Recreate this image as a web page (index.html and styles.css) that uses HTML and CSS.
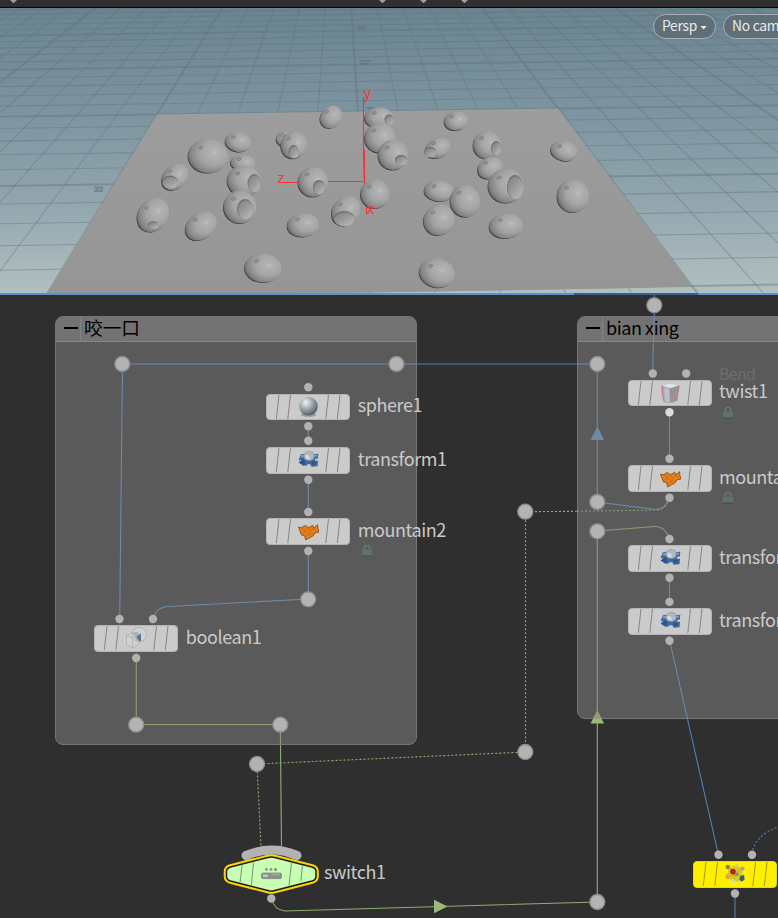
FILE: index.html
```html
<!DOCTYPE html>
<html lang="zh">
<head>
<meta charset="utf-8">
<title>Scene and network</title>
<link rel="stylesheet" href="styles.css">
</head>
<body>
<main class="app">
  <header class="topbar">
    <svg class="topbar-marks" viewBox="0 0 778 8"><path d="M10 0h7l-3.500 3.200zM379 0h7l-3.500 3.200zM420 0h7l-3.500 3.200zM461 0h7l-3.500 3.200z"/></svg>
  </header>

  <section class="viewport">
    <svg class="scene" viewBox="0 8 778 287">
      <defs>
        <linearGradient id="sky" x1="0" y1="0" x2="0" y2="1">
          <stop offset="0" stop-color="#6a8490"/><stop offset=".35" stop-color="#7c949f"/>
          <stop offset=".65" stop-color="#90a4ad"/><stop offset="1" stop-color="#b2c0c1"/>
        </linearGradient>
        <linearGradient id="ground" x1="0" y1="0" x2="0" y2="1">
          <stop offset="0" stop-color="#9d9d9d"/><stop offset="1" stop-color="#959595"/>
        </linearGradient>
        <radialGradient id="body" cx=".66" cy=".4" r=".82">
          <stop offset="0" stop-color="#c4c4c4"/><stop offset=".08" stop-color="#b3b3b3"/><stop offset=".45" stop-color="#a4a4a4"/>
          <stop offset=".72" stop-color="#868686"/><stop offset="1" stop-color="#3e3e3e"/>
        </radialGradient>
        <linearGradient id="cut" x1="0" y1="0" x2=".8" y2="1">
          <stop offset="0" stop-color="#7f7f7f"/><stop offset=".55" stop-color="#9c9c9c"/><stop offset="1" stop-color="#b8b8b8"/>
        </linearGradient>
      </defs>
      <rect x="0" y="8" width="778" height="287" fill="url(#sky)"/>
      <g id="grid" class="grid"></g>
      <g class="ticks">
        <path d="M94 187.500h8M94 191h9M97 187v5M103 187l-3 5"/><path d="M356 27h10M358 29h6M359 61h12M360 64h9M366 108h9"/>
      </g>
      <path d="M157 114.500 558 108.500 692 286 640 288 400 292 46 295z" fill="url(#ground)"/>
      <g class="axis"><path d="M364.500 150V189M279 182.500h20M328 181.500h35M366.500 207v7"/></g>
      <g id="apples"></g>
      <g class="axis"><path d="M363.500 97V150L364.300 182"/></g>
      <g class="axis-text"><text x="363.500" y="98">y</text><text x="277.500" y="183">z</text><text x="366.500" y="214">x</text></g>
      <path class="edge" d="M0 294h778"/><path class="edge edge-dark" d="M574 294h124"/>
    </svg>
    <div class="camera-menu">
      <button class="pill">Persp<span class="caret"></span></button>
      <button class="pill">No cam<span class="caret"></span></button>
    </div>
  </section>

  <section class="network">
    <div class="netbox box-bite">
      <div class="netbox-head"><span class="fold"><i></i></span><span>咬一口</span></div>
    </div>
    <div class="netbox box-deform">
      <div class="netbox-head latin"><span class="fold"><i></i></span><span>bian xing</span></div>
    </div>

    <svg class="wires" viewBox="0 295 778 623">
      <g class="blue-in">
        <path d="M416 364H122.500L119.700 619"/><path d="M308.300 426V441M308.300 480V512M308.300 551V599L169 606.500Q156 607 153 619"/>
        <path d="M577 364H597.300V502L656 509.500Q665 510 669.500 498"/>
        <path d="M653.900 317 652.700 373M669.500 412V459M669.500 578V602M669.500 640 687.500 719"/>
      </g>
      <g class="blue-out">
        <path d="M417 364H577M654.300 295V317M687.500 719 718.500 855M735 893V918"/>
        <path class="dash" d="M752 854Q754 836 778 827"/>
      </g>
      <g class="green-in">
        <path d="M136.300 658V724.500H280.300L280.500 744M597.300 719V531L655 526.500Q665 526 669.500 539"/>
        <path class="dash" d="M577 511.300 656 510Q665 510 669.500 498"/>
      </g>
      <g class="green-out">
        <path d="M280.500 745 281.500 848M271.300 898Q274 910 285 911L597.300 902V719"/>
        <path class="dash" d="M577 511.300 525.500 511.700V752L257 764 261 847"/>
      </g>
      <path fill="#7089a9" d="M597.300 426.500l6.800 13.500h-13.600z"/>
      <path fill="#9bb97a" d="M597.300 710.500l6.800 13h-13.600zM447.500 906.500l-13.500-6.800v13.600z"/>
      <path fill="#8d9e78" d="M597.300 710.500l4.400 8.500h-8.800z"/>
      <g class="dots">
        <circle cx="122.300" cy="364" r="7.500"/><circle cx="396.500" cy="364" r="7.500"/><circle cx="597.300" cy="364" r="7.500"/>
        <circle cx="308.200" cy="599.300" r="7.500"/><circle cx="136.200" cy="724.700" r="7.500"/><circle cx="280.300" cy="724.700" r="7.500"/>
        <circle cx="257" cy="764" r="7.500"/><circle cx="525.300" cy="752" r="7.500"/><circle cx="525.300" cy="511.700" r="7.500"/>
        <circle cx="597.300" cy="502" r="7.500"/><circle cx="597.300" cy="531.300" r="7.500"/><circle cx="654.300" cy="305.300" r="7.500"/>
        <circle cx="597.300" cy="902" r="7.500"/>
      </g>
      <g class="ports">
        <circle cx="308.300" cy="387.200" r="4.200"/><circle cx="308.300" cy="426.300" r="4.200"/><circle cx="308.300" cy="440.800" r="4.200"/>
        <circle cx="308.300" cy="479.800" r="4.200"/><circle cx="308.300" cy="512" r="4.200"/><circle cx="308.300" cy="551" r="4.200"/>
        <circle cx="119.500" cy="619" r="4.200"/><circle cx="153" cy="619" r="4.200"/><circle cx="136.200" cy="658" r="4.200"/>
        <circle cx="652.800" cy="373.500" r="4.200"/><circle cx="686.200" cy="373.500" r="4.200"/><circle cx="669.500" cy="412.300" r="4.200" class="lit"/>
        <circle cx="669.500" cy="458.800" r="4.200"/><circle cx="669.500" cy="497.700" r="4.200"/><circle cx="669.500" cy="539" r="4.200"/>
        <circle cx="669.500" cy="577.800" r="4.200"/><circle cx="669.500" cy="601.900" r="4.200"/><circle cx="669.500" cy="640.700" r="4.200"/>
        <circle cx="718.500" cy="854.700" r="4.200"/><circle cx="752" cy="854.700" r="4.200"/><circle cx="735" cy="893.500" r="4.200"/>
        <circle cx="271.300" cy="898.500" r="4.200"/>
      </g>
      <path class="collar" d="M246 855.500Q271.500 844.500 297 855.500"/>
      <g>
        <path class="switch-line" d="M267.800 857.500Q271.300 856.400 274.800 857.500L312 867Q316 868.200 316 871.500V876.500Q316 879.800 312 881L274.800 890.500Q271.300 891.600 267.800 890.500L230.500 881Q226.500 879.800 226.500 876.500V871.500Q226.500 868.200 230.500 867z"/>
        <path class="switch-fill" d="M267.800 857.500Q271.300 856.400 274.800 857.500L312 867Q316 868.200 316 871.500V876.500Q316 879.800 312 881L274.800 890.500Q271.300 891.600 267.800 890.500L230.500 881Q226.500 879.800 226.500 876.500V871.500Q226.500 868.200 230.500 867z"/>
        <path class="switch-bars" d="M242 865l-1.800 17M253.500 862.500l-2.200 23M291.500 862.500l-2.500 23M302.500 865.500l-1.700 16"/>
        <circle cx="266.500" cy="869.500" r="1.400" fill="#8b9a86"/><circle cx="271" cy="869.500" r="1.400" fill="#8b9a86"/><circle cx="275.500" cy="869.500" r="1.500" fill="#b27a52"/>
        <rect x="261.500" y="873" width="20" height="5.600" rx="1.500" fill="#87918d" stroke="#727b79" stroke-width=".7"/>
        <path d="M263 874.500h5v2.500h-5z" fill="#b8cdb8"/><path d="M271 874.300h9" stroke="#adb5b5"/>
      </g>
    </svg>

    <svg class="defs" aria-hidden="true">
      <defs>
        <radialGradient id="ball" cx=".36" cy=".3" r=".7"><stop offset="0" stop-color="#f1f4f5"/><stop offset=".45" stop-color="#a6afb5"/><stop offset="1" stop-color="#59636c"/></radialGradient>
      </defs>
      <symbol id="i-sphere" viewBox="0 0 22 22"><ellipse cx="11" cy="19" rx="8" ry="2.300" fill="#999"/><circle cx="11" cy="10.300" r="9.700" fill="url(#ball)"/></symbol>
      <symbol id="i-transform" viewBox="0 0 22 22">
        <path d="M3 5l4-.5 1.500 2h4.500l2-1.500 6.300-.5-.5 5-3.300.5.500 1.500 3 .5-.5 5.500-6.500.5-.8-2.200-3-.5-1 1.500-3.700.2-5-3.500 3.500-1-.5-1.500-3 .2z" fill="#41699c"/>
        <path d="M.8 13.500l4-3.500 3 3-1.500 3.500zM14 12.500l5 .5-1.500 3.500-3-.5z" fill="#2b5590"/><path d="M3 6l4-.5 1 2.500-4.500.5zM16 6l4-.8-.5 3z" fill="#7ea2cb"/>
        <path d="M6.500 5Q8 1.800 12 2q5 .3 5 4.500.3 4-4 5-5.500.3-6.500-3z" fill="#b0b7be" stroke="#858d96" stroke-width=".6"/><path d="M7.500 5.500l4.500 1v4.300l-4-1.500z" fill="#d5dade"/>
      </symbol>
      <symbol id="i-mountain" viewBox="0 0 22 22">
        <path d="M.6 7l3.200.5 3.700-2.300 3.500 2.300 4.500-2.500 1 3 4-3.700.3 4L22 12l-4.500 1-1.500 3-8 4.300-1-4.300-3.500-1z" fill="#e68019" stroke="#884813" stroke-width=".9"/>
        <path d="M3.800 7.500l3.700 2.800 3.500-2.800 2 3.500 3.500-3 2 2.500M5 14l2.500-3.700 4 4.700 1.500-4M7.500 17l4-2 5-1.500" fill="none" stroke="#b8641a" stroke-width=".7"/>
      </symbol>
      <symbol id="i-twist" viewBox="0 0 22 22">
        <path d="M1.700 3.500Q10 -.5 20.300 3L17.500 19.500Q11 23.500 4.500 20.500z" fill="#a3a9b0"/><path d="M9 6 19.500 3.500 17 19 10 21z" fill="#8f979f"/><path d="M4.500 6 10 6.500V21l-5-1z" fill="#bbc1c7"/>
        <path d="M2 3.500Q10 -.5 20 3L11 6z" fill="#dce2e6"/>
        <path d="M2 3.500Q1.500 12 4.500 20.500M20 3.200 17.500 19M10.500 6.500 16.800 18.500" fill="none" stroke="#c97378" stroke-width="1.100"/>
      </symbol>
      <symbol id="i-boolean" viewBox="0 0 22 22">
        <path d="M.5 8.500 7 5l7 3v9l-7 4.500-6.500-4zM.5 8.500l6.500 3 7-3.500M7 11.500v10" fill="#dbdbdb" fill-opacity=".5" stroke="#aaa" stroke-width=".8"/>
        <circle cx="14" cy="7.500" r="7.500" fill="#d8dadb" fill-opacity=".5" stroke="#aaa" stroke-width=".8"/>
        <path d="M7 6l3.500-1.500 5 2V14l-4.500-.5z" fill="#a6b1c1"/><path d="M11 9.500l4.700-3V14l-2 .7z" fill="#64718a"/>
      </symbol>
      <symbol id="i-scatter" viewBox="0 0 22 22">
        <path d="M3 5l6-3 8 2 2 9-5 6-7-1-4-5z" fill="#d8cb25"/><path d="M3 4 12 9 18 5M8 8l4 3 6 5M4 14l8-3-4 7" stroke="#bbae22" fill="none"/>
        <circle cx="3" cy="3.600" r="2.400" fill="#858b55"/><circle cx="12.500" cy="2.500" r="1.600" fill="#d5c995"/><circle cx="18.500" cy="5.500" r="2.200" fill="#b795a3"/>
        <circle cx="8.300" cy="8.500" r="3" fill="#b42419"/><circle cx="12.600" cy="11.200" r="2" fill="#88946a"/><circle cx="3" cy="13.500" r="2.700" fill="#eda728"/>
        <path d="M16 13l4-1 .5 5-3 2-2.500-2z" fill="#345e80"/><path d="M7 16l3 1 1 4-4 .5z" fill="#dddfa0"/>
      </symbol>
      <symbol id="i-lock" viewBox="0 0 12 13"><path d="M3.300 6V4a2.700 2.700 0 0 1 5.400 0v2" fill="none" stroke="#707a76" stroke-width="1.300"/><path d="M1.200 5.600h9.600l.6 6.600H.6z" fill="#5f716d"/><path d="M.8 12.100h10.400" stroke="#3e4a48" stroke-width=".9"/></symbol>
      <symbol id="node-bars" viewBox="0 0 84 26"><path d="M13 1 10.300 25M24.500 1 21.800 25M62.500 1 59.800 25M74 1 71.300 25"/></symbol>
    </svg>

    <div class="node n-sphere"><div class="tile"><svg class="bars"><use href="#node-bars"/></svg><svg class="icon"><use href="#i-sphere"/></svg></div><span class="name">sphere1</span></div>
    <div class="node n-transform"><div class="tile"><svg class="bars"><use href="#node-bars"/></svg><svg class="icon"><use href="#i-transform"/></svg></div><span class="name">transform1</span></div>
    <div class="node n-mountain2"><div class="tile"><svg class="bars"><use href="#node-bars"/></svg><svg class="icon"><use href="#i-mountain"/></svg></div><span class="name">mountain2</span><svg class="lock"><use href="#i-lock"/></svg></div>
    <div class="node n-boolean"><div class="tile"><svg class="bars"><use href="#node-bars"/></svg><svg class="icon"><use href="#i-boolean"/></svg></div><span class="name">boolean1</span></div>
    <div class="node n-twist"><div class="tile"><svg class="bars"><use href="#node-bars"/></svg><svg class="icon"><use href="#i-twist"/></svg></div><span class="kind">Bend</span><span class="name">twist1</span><svg class="lock"><use href="#i-lock"/></svg></div>
    <div class="node n-mountain"><div class="tile"><svg class="bars"><use href="#node-bars"/></svg><svg class="icon"><use href="#i-mountain"/></svg></div><span class="name">mountain1</span><svg class="lock"><use href="#i-lock"/></svg></div>
    <div class="node n-transform-a"><div class="tile"><svg class="bars"><use href="#node-bars"/></svg><svg class="icon"><use href="#i-transform"/></svg></div><span class="name">transform2</span></div>
    <div class="node n-transform-b"><div class="tile"><svg class="bars"><use href="#node-bars"/></svg><svg class="icon"><use href="#i-transform"/></svg></div><span class="name">transform3</span></div>
    <div class="node n-scatter"><div class="tile tile-yellow"><svg class="bars"><use href="#node-bars"/></svg><svg class="icon"><use href="#i-scatter"/></svg></div></div>
    <span class="name n-switch">switch1</span>
  </section>
</main>
<script src="scene.js"></script>
</body>
</html>
```
FILE: styles.css
```css
* { box-sizing: border-box; }
body { margin: 0; background: #2f2f2f; font-family: "Noto Sans CJK SC", "Noto Sans", sans-serif; }
.app { display: flex; flex-direction: column; width: 778px; height: 918px; overflow: hidden; }
.topbar { height: 8px; flex: none; background: #2f2f2f; border-bottom: 1px solid #050505; overflow: hidden; }
.topbar-marks { display: block; width: 778px; height: 8px; fill: #a0a0a0; }

.viewport { position: relative; height: 287px; flex: none; overflow: hidden; }
.scene { display: block; width: 778px; height: 287px; }
.grid { fill: none; stroke: #5f727f; stroke-opacity: .42; stroke-width: 1.1; }
.grid .major { stroke-width: 2; }
.ticks { fill: none; stroke: #61717f; stroke-width: 1.8; stroke-opacity: .6; }
.axis { fill: none; stroke: #f23434; stroke-width: 1.1; }
.axis-text { fill: #fa3333; font: 15px "Noto Sans", sans-serif; }
.edge { stroke: #5e90c8; stroke-width: 2; }
.edge-dark { stroke: #375f8e; }
.dimple { fill: #969696; stroke: #757575; stroke-width: .7; }
.bite-rim { fill: #707070; }
.camera-menu { position: absolute; left: 653px; top: 6px; display: flex; gap: 7px; }
.pill { display: flex; align-items: center; justify-content: center; gap: 3px; flex: none; height: 25px; width: 63px; padding: 0 0 3px; border: 1.5px solid #a9b0b4; border-radius: 13px; background: #5f6f78; color: #e8eaeb; font: 13.800px/20px "Noto Sans CJK SC", sans-serif; letter-spacing: -.25px; white-space: nowrap; }
.pill + .pill { width: 90px; justify-content: flex-start; padding-left: 8px; }
.caret { width: 7px; height: 4px; background: #f0f0f0; clip-path: polygon(0 0, 100% 0, 50% 100%); margin-top: 5px; }

.network { position: relative; flex: 1; background: #2f2f2f; overflow: hidden; }
.netbox { position: absolute; background: #5a5a5a; border: 1px solid #757575; border-radius: 8px; overflow: hidden; }
.box-bite { left: 55px; top: 21px; width: 362px; height: 429px; }
.box-deform { left: 577px; top: 21px; width: 260px; height: 403px; }
.netbox-head { display: flex; align-items: center; height: 25px; background: #737373; border-bottom: 1px solid #858585; color: #000; font-size: 18.700px; line-height: 24px; gap: 3px; }
.netbox-head span:last-child { margin-top: -5px; }
.latin { font-size: 18px; letter-spacing: -.42px; }
.fold { display: flex; flex: none; width: 25px; height: 24px; border-right: 1px solid #838383; align-items: center; padding-left: 8px; }
.fold i { width: 14px; height: 2px; background: #000; margin-top: -2px; }

.wires { position: absolute; inset: 0; width: 778px; height: 623px; fill: none; stroke-width: 1.1; }
.blue-in { stroke: #6e89ae; }
.blue-out { stroke: #527fb9; }
.green-in { stroke: #8d9d74; }
.green-out { stroke: #90ae70; }
.dash { stroke-dasharray: 2 2; }
.dots { fill: #b3b3b3; stroke: #8c8c8c; stroke-width: 1.3; }
.ports { fill: #b2b2b2; }
.lit { fill: #dadada; }
.collar { stroke: #b2b2b2; stroke-width: 9; stroke-linecap: round; }
.switch-line { stroke: #ffd20a; stroke-width: 5.600; }
.switch-fill { fill: #c9ffb5; stroke: #1c1e10; stroke-width: 1.500; }
.switch-bars { stroke: #7f9e75; }
.defs { position: absolute; width: 0; height: 0; }

.node { position: absolute; width: 84px; height: 26px; }
.tile { position: relative; display: flex; align-items: center; justify-content: center; width: 84px; height: 26.500px; background: #cbcbcb; border: 1px solid #b4b4b4; border-radius: 4px; }
.tile-yellow { background: #fff000; border-color: #e2d91a; }
.bars { position: absolute; left: -1px; top: -1px; width: 84px; height: 26px; stroke: #858585; stroke-width: 1; }
.tile-yellow .bars { stroke: #a49b10; }
.icon { width: 21px; height: 22px; margin-left: 1px; overflow: visible; }
.name { position: absolute; left: 91.500px; top: -2.500px; font-size: 18px; letter-spacing: -.42px; line-height: 26px; color: #cacaca; white-space: nowrap; }
.kind { position: absolute; left: 91.500px; top: -19px; font-size: 16px; letter-spacing: -.7px; line-height: 24px; color: #6d6d6d; }
.lock { position: absolute; left: 94.500px; top: 26px; width: 12px; height: 13px; }
.n-sphere { left: 266.300px; top: 98.600px; }
.n-transform { left: 266.300px; top: 152.200px; }
.n-mountain2 { left: 266.300px; top: 223.200px; }
.n-boolean { left: 94.300px; top: 330.200px; }
.n-twist { left: 627.500px; top: 84.600px; }
.n-mountain { left: 627.500px; top: 170.100px; }
.n-transform-a { left: 627.500px; top: 250.100px; }
.n-transform-b { left: 627.500px; top: 313.200px; }
.n-scatter { left: 693.200px; top: 566px; }
.n-switch { left: 324px; top: 563px; }
```
FILE: scene.js
```js
const NS = "http://www.w3.org/2000/svg";
function add(parent, tag, attrs) {
  const el = document.createElementNS(NS, tag);
  for (const k in attrs) el.setAttribute(k, attrs[k]);
  parent.appendChild(el);
  return el;
}

// Perspective map of the ground plane: unit square to its four screen corners.
const [x0, y0, x1, y1, x2, y2, x3, y3] = [157, 114.5, 558, 108.5, 692, 286, 45, 297];
const dx1 = x1 - x2, dx2 = x3 - x2, dx3 = x0 - x1 + x2 - x3;
const dy1 = y1 - y2, dy2 = y3 - y2, dy3 = y0 - y1 + y2 - y3;
const det = dx1 * dy2 - dx2 * dy1;
const g = (dx3 * dy2 - dx2 * dy3) / det, h = (dx1 * dy3 - dx3 * dy1) / det;
const a = x1 - x0 + g * x1, b = x3 - x0 + h * x3;
const d = y1 - y0 + g * y1, e = y3 - y0 + h * y3;
function project(u, v) {
  const s = (u + 5) / 10, t = (v + 5) / 10, w = g * s + h * t + 1;
  return w > 0.05 ? [(a * s + b * t + x0) / w, (d * s + e * t + y0) / w] : null;
}
function line(p, q, major) {
  if (!p || !q) return;
  add(grid, "path", { d: `M${p[0].toFixed(1)} ${p[1].toFixed(1)}L${q[0].toFixed(1)} ${q[1].toFixed(1)}`, class: major ? "major" : "minor" });
}
const grid = document.getElementById("grid");
for (let u = -30; u <= 30; u++) line(project(u, -32), project(u, 6), u % 5 === 0);
for (let v = -25; v <= 6; v++) line(project(-30, v), project(30, v), v % 5 === 0);

// x, y, rx, ry, rotation, then the bite: x, y, rx, ry
const apples = [
  [331,117,12,10.5,-50],[238,142,13,10,10],[208,156,20,17,0],[286,139,10,8,0],
  [294,145,14,13,-60,293.5,151.5,5,6.5],[175,177,15,11.5,-45,170,182,8,6.5],
  [243,163,12.5,8.5,5],[244,181,17,15.5,10,254,183,6.5,9],[240,207,16.5,16.5,0,245,209,8,10],
  [153,215,18,15,-55,153,225,5,3.8],[201,226,17,13,-35],[313,182,15,15,0,319,187,6,7],
  [346,211,16,13.5,-50,344,218.5,10.5,7.5],[303,225,16,12,-5],[263,268,18.5,14.5,3],
  [375,194,14.5,14.5,-40],[379,118,14.5,10.5,0,389,119.5,4.5,5],[380,138,15.5,15,0],
  [393,155,15,15,0,401,160,6,5],[456,121,12,9.5,-8],[438,148,13,10,-25,430,152,6,5],
  [487,145,14,14,0,496,148,5,7],[490,168,13,10.5,-25],[506,186,18,17,0,515,187,8,12],
  [564,151,13.5,10,12],[573,196,16,16.5,0],[439,191,15,10.5,5],[465,201,15,16.2,-10],
  [439,220,16,15,-40],[506,226,17,12.5,-5],[437,273,18,14.5,12]
];
const group = document.getElementById("apples");
for (const [x, y, rx, ry, r, bx, by, brx, bry] of apples) {
  const turn = `rotate(${r} ${x} ${y})`;
  // Dark crescent on the side away from the light, always to the lower left.
  add(group, "ellipse", { cx: x, cy: y, rx: rx - 0.4, ry: ry - 0.4, transform: `translate(-.8 .9) ${turn}`, fill: "#343434" });
  // The light stays fixed, so the gradient is turned back by the body's own angle.
  const id = `b${x}-${y}`;
  add(group, "radialGradient", { id, href: "#body", gradientTransform: `rotate(${-r} .5 .5)` });
  add(group, "ellipse", { cx: x, cy: y, rx, ry, transform: turn, fill: `url(#${id})` });
  add(group, "ellipse", { cx: x - rx * 0.2, cy: y - ry * 0.6, rx: 2.2, ry: 1.3, transform: `rotate(-20 ${x} ${y})`, class: "dimple" });
  if (bx) {
    add(group, "ellipse", { cx: bx, cy: by, rx: brx, ry: bry, class: "bite-rim" });
    add(group, "ellipse", { cx: bx + 0.5, cy: by + 0.8, rx: brx - 0.4, ry: bry - 0.6, fill: "url(#cut)" });
  }
}
```
